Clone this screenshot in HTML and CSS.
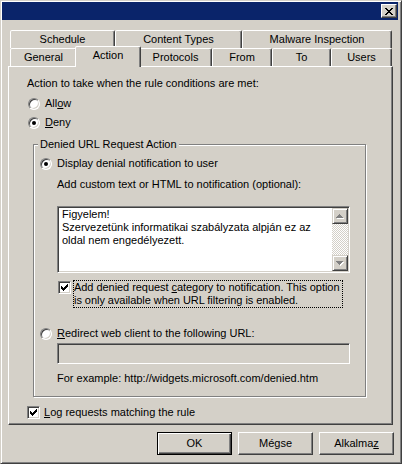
FILE: index.html
```html
<!DOCTYPE html>
<html>
<head>
<meta charset="utf-8">
<link rel="stylesheet" href="styles.css">
</head>
<body>
<div class="window">
  <div class="titlebar">
    <div class="close">
      <svg width="8" height="7" viewBox="0 0 8 7" shape-rendering="crispEdges"><path fill="#000" d="M0 0h2v1h-2z M6 0h2v1h-2z M1 1h2v1h-2z M5 1h2v1h-2z M2 2h4v1h-4z M3 3h2v1h-2z M2 4h4v1h-4z M1 5h2v1h-2z M5 5h2v1h-2z M0 6h2v1h-2z M6 6h2v1h-2z"/></svg>
    </div>
  </div>
  <div class="tabs">
    <div class="tabrow">
      <div class="tab w-schedule">Schedule</div>
      <div class="tab w-content">Content Types</div>
      <div class="tab w-malware">Malware Inspection</div>
    </div>
    <div class="tabrow">
      <div class="tab w-general">General</div>
      <div class="tab w-action selected">Action</div>
      <div class="tab w-protocols">Protocols</div>
      <div class="tab w-from">From</div>
      <div class="tab w-to">To</div>
      <div class="tab w-users">Users</div>
    </div>
  </div>
  <div class="panel">
    <div class="line">Action to take when the rule conditions are met:</div>
    <div class="opt allow"><span class="radio"></span><span>All<u>o</u>w</span></div>
    <div class="opt deny"><span class="radio on"></span><span><u>D</u>eny</span></div>
    <div class="group">
      <div class="legend">Denied URL Request Action</div>
      <div class="opt gopt display"><span class="radio on"></span><span>Display denial notification to user</span></div>
      <div class="sub addcustom">Add custom text or HTML to notification (optional):</div>
      <div class="sub textarea">
        <div class="ta-text">Figyelem!<br>Szervezetünk informatikai szabályzata alpján ez az<br>oldal nem engedélyezett.</div>
        <div class="scrollbar">
          <div class="sbtn"><svg width="8" height="5" viewBox="0 0 8 5" shape-rendering="crispEdges"><path fill="#fff" transform="translate(1 1)" d="M3 0h1v1h-1z M2 1h3v1h-3z M1 2h5v1h-5z M0 3h7v1h-7z"/><path fill="#808080" d="M3 0h1v1h-1z M2 1h3v1h-3z M1 2h5v1h-5z M0 3h7v1h-7z"/></svg></div>
          <div class="track"></div>
          <div class="sbtn"><svg width="8" height="5" viewBox="0 0 8 5" shape-rendering="crispEdges"><path fill="#fff" transform="translate(1 1)" d="M0 0h7v1h-7z M1 1h5v1h-5z M2 2h3v1h-3z M3 3h1v1h-1z"/><path fill="#808080" d="M0 0h7v1h-7z M1 1h5v1h-5z M2 2h3v1h-3z M3 3h1v1h-1z"/></svg></div>
        </div>
      </div>
      <div class="sub cbrow">
        <span class="check"><svg width="7" height="7" viewBox="0 0 7 7" shape-rendering="crispEdges"><path fill="#000" d="M6 0h1v1h-1z M5 1h2v1h-2z M0 2h1v1h-1z M4 2h3v1h-3z M0 3h2v1h-2z M3 3h3v1h-3z M0 4h5v1h-5z M1 5h3v1h-3z M2 6h1v1h-1z"/></svg></span>
        <div class="focus">Add denied request <u>c</u>ategory to notification. This option<br>is only available when URL filtering is enabled.</div>
      </div>
      <div class="opt gopt redirect"><span class="radio"></span><span><u>R</u>edirect web client to the following URL:</span></div>
      <div class="sub input"></div>
      <div class="sub example">For example: http://widgets.microsoft.com/denied.htm</div>
    </div>
    <div class="opt log"><span class="check"><svg width="7" height="7" viewBox="0 0 7 7" shape-rendering="crispEdges"><path fill="#000" d="M6 0h1v1h-1z M5 1h2v1h-2z M0 2h1v1h-1z M4 2h3v1h-3z M0 3h2v1h-2z M3 3h3v1h-3z M0 4h5v1h-5z M1 5h3v1h-3z M2 6h1v1h-1z"/></svg></span><span><u>L</u>og requests matching the rule</span></div>
  </div>
  <div class="buttons">
    <div class="btn default">OK</div>
    <div class="btn">Mégse</div>
    <div class="btn">Alkalma<u>z</u></div>
  </div>
</div>
</body>
</html>
```
FILE: styles.css
```css
html, body {
  margin: 0;
  padding: 0;
  background: #d4d0c8;
}
body {
  font-family: "Liberation Sans", Arial, sans-serif;
  font-size: 11px;
  line-height: 13px;
  color: #000;
}
u { text-decoration-thickness: 1px; text-underline-offset: 1px; }

.window {
  width: 402px;
  height: 464px;
  box-sizing: border-box;
  border: 1px solid;
  border-color: #d4d0c8 #404040 #404040 #d4d0c8;
  box-shadow: inset 1px 1px #fff, inset -1px -1px #808080;
  padding: 1px;
  background: #d4d0c8;
  display: flex;
  flex-direction: column;
}

.titlebar {
  height: 18px;
  margin-right: 2px;
  background: #0a246a;
  display: flex;
  justify-content: flex-end;
  align-items: flex-start;
  padding: 2px 1px 0 0;
  box-sizing: border-box;
  flex: none;
}
.close {
  width: 16px;
  height: 14px;
  box-sizing: border-box;
  background: #d4d0c8;
  border: 1px solid;
  border-color: #fff #404040 #404040 #fff;
  box-shadow: inset -1px -1px #808080;
  display: flex;
  align-items: center;
  justify-content: center;
}

.tabs {
  margin: 10px 0 0 8px;
  width: 382px;
  flex: none;
}
.tabrow {
  display: flex;
  height: 18px;
}
.tab {
  box-sizing: border-box;
  height: 18px;
  flex: none;
  border: 1px solid;
  border-bottom: 0;
  border-color: #fff #404040 transparent #fff;
  box-shadow: inset -1px 0 #808080;
  border-radius: 2px 2px 0 0;
  text-align: center;
  padding-top: 2px;
  background: #d4d0c8;
  white-space: nowrap;
}
.w-schedule { width: 105px; }
.w-content { width: 127px; }
.w-malware { width: 150px; }
.w-general { width: 67px; }
.w-action { width: 62px; }
.w-protocols { width: 73px; }
.w-from { width: 60px; }
.w-to { width: 59px; }
.w-users { width: 61px; }
.tab.selected {
  width: 66px;
  height: 21px;
  margin: -2px -2px 0 -2px;
  position: relative;
  z-index: 1;
}

.panel {
  margin: 0 7px 0 6px;
  border: 1px solid;
  border-color: #fff #404040 #404040 #fff;
  box-shadow: inset -1px -1px #808080;
  padding: 10px 0 5px 18px;
  flex: none;
}

.opt {
  display: flex;
  align-items: center;
  height: 13px;
  gap: 5px;
  white-space: nowrap;
}
.allow { margin: 7px 0 0 1px; }
.deny { margin: 6px 0 0 1px; }
.log { margin-top: 9px; gap: 4px; }

.radio {
  width: 12px;
  height: 12px;
  box-sizing: border-box;
  border-radius: 50%;
  border: 1px solid;
  border-color: #808080 #fff #fff #808080;
  box-shadow: inset 1px 1px #404040, inset -1px -1px #d4d0c8;
  background: #fff;
  flex: none;
  display: flex;
  align-items: center;
  justify-content: center;
}
.radio.on::after {
  content: "";
  width: 4px;
  height: 4px;
  border-radius: 50%;
  background: #000;
}

.check {
  width: 13px;
  height: 13px;
  box-sizing: border-box;
  border: 1px solid;
  border-color: #808080 #fff #fff #808080;
  box-shadow: inset 1px 1px #404040, inset -1px -1px #d4d0c8;
  background: #fff;
  flex: none;
  display: flex;
  align-items: center;
  justify-content: center;
}

.group {
  margin: 15px 0 0 6px;
  width: 333px;
  box-sizing: border-box;
  border: 1px solid #808080;
  box-shadow: inset 1px 1px #fff, 1px 1px #fff;
  padding: 0 0 11px 6px;
}
.legend {
  width: fit-content;
  margin: -7px 0 0 -2px;
  padding: 0 2px;
  background: #d4d0c8;
  white-space: nowrap;
}
.display { margin-top: 6px; }
.redirect { margin-top: 19px; }
.sub { margin-left: 17px; white-space: nowrap; }
.addcustom { margin-top: 8px; }

.textarea {
  margin-top: 15px;
  width: 293px;
  height: 67px;
  box-sizing: border-box;
  border: 1px solid;
  border-color: #808080 #fff #fff #808080;
  box-shadow: inset 1px 1px #404040, inset -1px -1px #d4d0c8;
  padding: 1px;
  background: #fff;
  display: flex;
}
.ta-text {
  flex: 1;
  padding-left: 3px;
}
.scrollbar {
  width: 16px;
  display: flex;
  flex-direction: column;
}
.sbtn {
  height: 16px;
  flex: none;
  box-sizing: border-box;
  border: 1px solid;
  border-color: #d4d0c8 #404040 #404040 #d4d0c8;
  box-shadow: inset 1px 1px #fff, inset -1px -1px #808080;
  background: #d4d0c8;
  display: flex;
  align-items: center;
  justify-content: center;
}
.track {
  flex: 1;
  background-color: #d4d0c8;
  background-image: conic-gradient(#fff 25%, #d4d0c8 0 50%, #fff 0 75%, #d4d0c8 0);
  background-size: 2px 2px;
}

.cbrow {
  margin-top: 7px;
  display: flex;
  align-items: flex-start;
}
.cbrow .check { margin: 1px 2px 0 1px; }
.focus {
  width: 270px;
  box-sizing: border-box;
  border: 1px dotted #000;
  letter-spacing: -0.05px;
}

.input {
  margin-top: 3px;
  width: 293px;
  height: 21px;
  box-sizing: border-box;
  border: 1px solid;
  border-color: #808080 #fff #fff #808080;
  box-shadow: inset 1px 1px #404040, inset -1px -1px #d4d0c8;
  background: #d4d0c8;
}
.example { margin-top: 8px; }

.buttons {
  display: flex;
  justify-content: flex-end;
  gap: 6px;
  margin-top: 7px;
  padding-right: 6px;
  flex: none;
}
.btn {
  width: 75px;
  height: 23px;
  box-sizing: border-box;
  border: 1px solid;
  border-color: #fff #404040 #404040 #fff;
  box-shadow: inset -1px -1px #808080;
  display: flex;
  align-items: center;
  justify-content: center;
}
.btn.default {
  border-color: #000;
  box-shadow: inset 1px 1px #fff, inset -1px -1px #404040, inset -2px -2px #808080;
}
```
